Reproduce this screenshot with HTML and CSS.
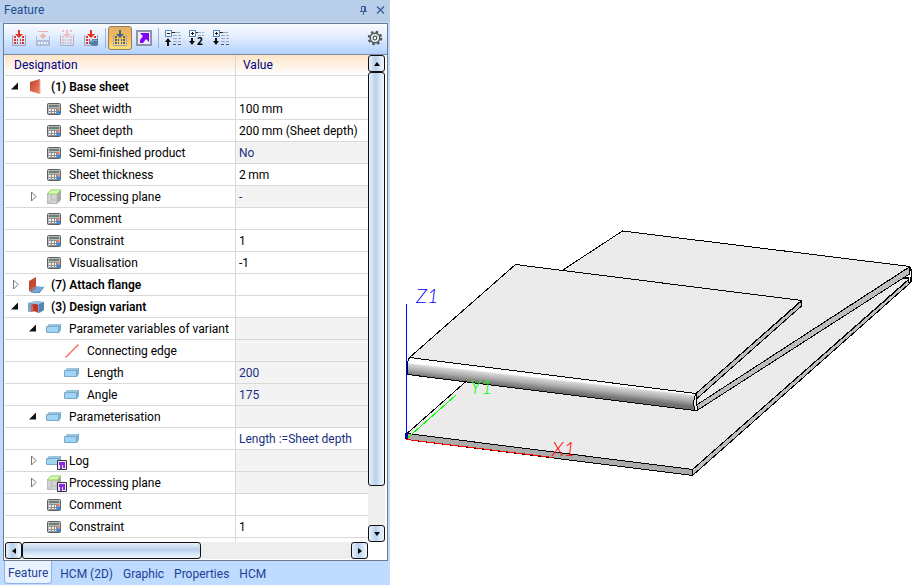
FILE: index.html
```html
<!DOCTYPE html>
<html lang="en">
<head>
<meta charset="utf-8">
<title>Feature</title>
<link rel="stylesheet" href="styles.css">
</head>
<body>
<svg class="defs" aria-hidden="true">
  <defs>
    <linearGradient id="gRed" x1="0" y1="0" x2="1" y2="1"><stop offset="0" stop-color="#c23a22"/><stop offset="1" stop-color="#f08a70"/></linearGradient>
    <symbol id="calc" viewBox="0 0 16 16"><rect x="1.500" y="2.500" width="13" height="11" rx="1" fill="#b9b9b9" stroke="#606060"/><path d="M3 4h10v2H3z" fill="#6b8074"/><path d="M3 7h10v6H3z" fill="#8f8f8f"/><path d="M3 8h2v2H3zM6 8h2v2H6zM3 11h2v1H3zM6 11h2v1H6zM9 8h1v2H9zM9 11h1v1H9z" fill="#f4f4f4"/><path d="M11 7h2v2h-2z" fill="#f27a5c"/><path d="M11 10h3v3h-3z" fill="#2f8df0"/></symbol>
    <symbol id="cube" viewBox="0 0 16 16"><path d="M1 5h10v10H1z" fill="#d4d4d4"/><path d="M11 5l4-4v10l-4 4z" fill="#a9a9a9"/><path d="M1 5l4-4h10l-4 4z" fill="#dcf8c0" stroke="#8bd94a"/><path d="M1.500 5v9.500h9.500V5M5.500 5v6L2 14M5.500 11H11" fill="none" stroke="#bbb"/></symbol>
    <symbol id="plate" viewBox="0 0 16 16"><path d="M1 6l2-3h12v6l-2 3H1z" fill="#7fb0cf"/><path d="M1 6h12v5H1z" fill="#9fd4f7"/><path d="M.500 5.500h12v6H.500zM12.500 5.500l2-2.500" fill="none" stroke="#7aa9c8"/><path d="M3 4h11" stroke="#b4d8ec"/></symbol>
    <symbol id="sheet" viewBox="0 0 16 16"><path d="M2 3l10-3v15l-10-3z" fill="url(#gRed)"/><path d="M12 1v14" stroke="#f2b4a3"/></symbol>
    <symbol id="flange" viewBox="0 0 16 16"><path d="M1 4l7-4v9l-7 5z" fill="#c5492f"/><path d="M1 14l7-5 8 1-5 6z" fill="#78a9d6"/><path d="M1 14l7-5v2l-5 4z" fill="#9d6f78"/><path d="M3 15l8 1 5-6" fill="none" stroke="#4e83b4"/></symbol>
    <symbol id="variant" viewBox="0 0 16 16"><path d="M0 4l8-2 8 1v8l-5 3-4-2-7 1z" fill="#77a5cb"/><path d="M0 4l8-2 8 1-5 2z" fill="#9bc2e0"/><path d="M11 5l5-2v8l-5 3z" fill="#5586b3"/><path d="M3 6q5-2 7 0v8q-3-3-7-1z" fill="#bd3526"/><path d="M3 6l2 1v5l-2 1z" fill="#dc6954"/></symbol>
    <symbol id="edge" viewBox="0 0 16 16"><path d="M1.500 14.500l13-13" stroke="#ff6b61" stroke-width="1.500"/></symbol>
    <symbol id="link" viewBox="0 0 10 10"><path d="M.5.5h9v9h-9z" fill="#eee3fb" stroke="#333"/><path d="M2 2h6v6H6V5H5v4H3V5H2z" fill="#8a2be2"/></symbol>
    <symbol id="open" viewBox="0 0 9 11"><path d="M8 1.500v7H1z" fill="#111"/></symbol>
    <symbol id="closed" viewBox="0 0 9 11"><path d="M3.500 1v9l4.500-4.500z" fill="#fff" stroke="#777"/></symbol>
    <symbol id="cells" viewBox="0 0 16 16"><path d="M1.500 5v10.500h13V5" fill="none" stroke="#9ca6bd"/><path d="M3 6h2v2H3zM11 6h2v2h-2zM3 9h2v2H3zM6 9h1v2H6zM9 9h1v2H9zM11 9h2v2h-2zM3 12h2v2H3zM6 12h1v2H6zM9 12h1v2H9zM11 12h2v2h-2z"/><path d="M7 0h2v4h3L8 8 4 4h3z"/></symbol>
    <symbol id="list" viewBox="0 0 10 16"><path d="M0 2.500h4" stroke="#222"/><path d="M1 5.500h4M6 5.500h3M1 8.500h4M6 8.500h3M1 11.500h4M6 11.500h3M3 2.500h5" stroke="#9baab5"/><path d="M1 14.500h3M6 14.500h3" stroke="#556"/></symbol>
    <symbol id="plus" viewBox="0 0 7 7"><path d="M.5.500h6v6h-6z" fill="#fff" stroke="#4c83bd"/><path d="M2 3.500h3M3.500 2v3" stroke="#111"/></symbol>
    <symbol id="down" viewBox="0 0 6 7"><path d="M2 0h2v3h2L3 7 0 3h2z" fill="#111"/></symbol>
  </defs>
</svg>
<div class="app">
  <aside class="panel">
    <header class="title">
      <h1>Feature</h1>
      <button class="tiny" aria-label="Pin"><svg viewBox="0 0 9 10"><path d="M2.500 6V1.500h4V6M1 6.500h7M4.500 7v3M5.500 2v4" fill="none" stroke="#385f9c"/></svg></button>
      <button class="tiny" aria-label="Close"><svg viewBox="0 0 9 10"><path d="M1 1.500l7 7M8 1.500l-7 7" fill="none" stroke="#385f9c" stroke-width="1.400"/></svg></button>
    </header>
    <div class="frame">
      <div class="toolbar">
        <button aria-label="Insert feature"><svg class="ic red"><use href="#cells"/></svg></button>
        <button aria-label="Insert at end" disabled><svg class="ic" viewBox="0 0 16 16"><path d="M3 1.500h10" stroke="#efb3ad"/><path d="M7 3h2v2h3L8 9 4 5h3z" fill="#efb3ad"/><path d="M1.500 6v9.500h13V6" stroke="#a9b9d5" fill="none"/><path d="M2 10h12v5H2z" fill="#b0bfdb"/><path d="M3 12h2v2H3zM6 12h2v2H6zM9 12h2v2H9zM12 12h1v2h-1z" fill="#eef4ff"/></svg></button>
        <button aria-label="Insert all" disabled><svg class="ic pale" viewBox="0 0 16 16"><use href="#cells"/><path d="M3 0h2v2H3zM11 0h2v2h-2z"/></svg></button>
        <button aria-label="Edit feature"><svg class="ic red" viewBox="0 0 16 16"><use href="#cells"/><path d="M6 12l5-3 4 0v6l-3 1-4-1z" fill="#4e7da8"/><path d="M8 12l4-2 2 1" fill="none" stroke="#91b5d2"/></svg></button>
        <i class="sep"></i>
        <button class="on" aria-label="Show structure" aria-pressed="true"><svg class="ic slate"><use href="#cells"/></svg></button>
        <button aria-label="Show links"><svg class="ic" viewBox="0 0 16 16"><path d="M1 1h14v14H1z" fill="#f1ecfb" stroke="#8a94aa" stroke-width="2"/><path d="M4 3h9v9l-3-3-3 4H4v-3l3-4z" fill="#8000ff"/></svg></button>
        <i class="sep"></i>
        <button aria-label="Collapse all"><svg class="ic" viewBox="0 0 16 16"><path d="M.5.500h6v6h-6z" fill="#fff" stroke="#4c83bd"/><path d="M2 3.500h3" stroke="#111"/><path d="M3 8l3 4H4v4H2v-4H0z" fill="#111"/><use href="#list" x="7" width="10" height="16"/></svg></button>
        <button aria-label="Expand two levels"><svg class="ic" viewBox="0 0 16 16"><use href="#plus" width="7" height="7"/><use href="#down" y="8" width="6" height="7"/><path d="M7 2.500h3" stroke="#222"/><path d="M9 2.500h6M9 5.500h6" stroke="#9baab5" stroke-dasharray="3 1"/><text x="8" y="15" class="two">2</text></svg></button>
        <button aria-label="Expand all"><svg class="ic" viewBox="0 0 16 16"><use href="#plus" width="7" height="7"/><use href="#down" y="8" width="6" height="7"/><use href="#list" x="7" width="10" height="16"/></svg></button>
        <button class="gear" aria-label="Settings"><svg class="ic" viewBox="0 0 16 16"><circle cx="8" cy="8" r="6.300" fill="none" stroke="#555" stroke-width="2" stroke-dasharray="2.475 2.475"/><circle cx="8" cy="8" r="4.800" fill="#e4effe" stroke="#555" stroke-width="1.500"/><circle cx="8" cy="8" r="1.800" fill="#fff" stroke="#555" stroke-width="1.200"/></svg></button>
      </div>
      <div class="grid">
        <div class="rows">
          <table>
            <thead><tr><th>Designation</th><th>Value</th></tr></thead>
            <tbody>
              <tr class="l0"><td><svg class="tw"><use href="#open"/></svg><svg class="ic"><use href="#sheet"/></svg><b>(1) Base sheet</b></td><td></td></tr>
              <tr class="l1"><td><i class="tw"></i><svg class="ic"><use href="#calc"/></svg>Sheet width</td><td>100&#8201;mm</td></tr>
              <tr class="l1"><td><i class="tw"></i><svg class="ic"><use href="#calc"/></svg>Sheet depth</td><td>200&#8201;mm (Sheet depth)</td></tr>
              <tr class="l1"><td><i class="tw"></i><svg class="ic"><use href="#calc"/></svg>Semi-finished product</td><td class="ro">No</td></tr>
              <tr class="l1"><td><i class="tw"></i><svg class="ic"><use href="#calc"/></svg>Sheet thickness</td><td>2&#8201;mm</td></tr>
              <tr class="l1"><td><svg class="tw"><use href="#closed"/></svg><svg class="ic"><use href="#cube"/></svg>Processing plane</td><td class="ro">-</td></tr>
              <tr class="l1"><td><i class="tw"></i><svg class="ic"><use href="#calc"/></svg>Comment</td><td></td></tr>
              <tr class="l1"><td><i class="tw"></i><svg class="ic"><use href="#calc"/></svg>Constraint</td><td>1</td></tr>
              <tr class="l1"><td><i class="tw"></i><svg class="ic"><use href="#calc"/></svg>Visualisation</td><td>-1</td></tr>
              <tr class="l0"><td><svg class="tw"><use href="#closed"/></svg><svg class="ic"><use href="#flange"/></svg><b>(7) Attach flange</b></td><td></td></tr>
              <tr class="l0"><td><svg class="tw"><use href="#open"/></svg><svg class="ic"><use href="#variant"/></svg><b>(3) Design variant</b></td><td></td></tr>
              <tr class="l1"><td><svg class="tw"><use href="#open"/></svg><svg class="ic"><use href="#plate"/></svg>Parameter variables of variant</td><td class="ro"></td></tr>
              <tr class="l2"><td><i class="tw"></i><svg class="ic"><use href="#edge"/></svg>Connecting edge</td><td class="ro"></td></tr>
              <tr class="l2"><td><i class="tw"></i><svg class="ic"><use href="#plate"/></svg>Length</td><td class="ro">200</td></tr>
              <tr class="l2"><td><i class="tw"></i><svg class="ic"><use href="#plate"/></svg>Angle</td><td class="ro">175</td></tr>
              <tr class="l1"><td><svg class="tw"><use href="#open"/></svg><svg class="ic"><use href="#plate"/></svg>Parameterisation</td><td class="ro"></td></tr>
              <tr class="l2"><td><i class="tw"></i><svg class="ic"><use href="#plate"/></svg></td><td class="rw">Length :=Sheet depth</td></tr>
              <tr class="l1"><td><svg class="tw"><use href="#closed"/></svg><svg class="ic" viewBox="0 0 16 16"><use href="#plate"/><use href="#link" x="11" y="7" width="10" height="10"/></svg>Log</td><td class="ro"></td></tr>
              <tr class="l1"><td><svg class="tw"><use href="#closed"/></svg><svg class="ic" viewBox="0 0 16 16"><use href="#cube"/><use href="#link" x="11" y="7" width="10" height="10"/></svg>Processing plane</td><td class="ro"></td></tr>
              <tr class="l1"><td><i class="tw"></i><svg class="ic"><use href="#calc"/></svg>Comment</td><td></td></tr>
              <tr class="l1"><td><i class="tw"></i><svg class="ic"><use href="#calc"/></svg>Constraint</td><td>1</td></tr>
              <tr class="l1"><td></td><td></td></tr>
            </tbody>
          </table>
        </div>
        <div class="sb vert">
          <button class="arrow" aria-label="Scroll up"><svg viewBox="0 0 8 8"><path d="M1 6h6L4 2z"/></svg></button>
          <div class="thumb"></div><div class="track"></div>
          <button class="arrow" aria-label="Scroll down"><svg viewBox="0 0 8 8"><path d="M1 2h6L4 6z"/></svg></button>
        </div>
        <div class="sb horz">
          <button class="arrow" aria-label="Scroll left"><svg viewBox="0 0 8 8"><path d="M6 1v6L2 4z"/></svg></button>
          <div class="thumb"></div><div class="track"></div>
          <button class="arrow" aria-label="Scroll right"><svg viewBox="0 0 8 8"><path d="M2 1v6l4-3z"/></svg></button>
        </div>
      </div>
    </div>
    <nav class="tabs"><button class="active">Feature</button><button>HCM (2D)</button><button>Graphic</button><button>Properties</button><button>HCM</button></nav>
  </aside>
  <main class="view">
    <svg class="scene" viewBox="390 0 524 585" preserveAspectRatio="xMinYMin meet" role="img" aria-label="Folded sheet">
      <defs><linearGradient id="roll" gradientUnits="userSpaceOnUse" x1="410" y1="357" x2="408" y2="375"><stop offset="0" stop-color="#fff"/><stop offset=".32" stop-color="#fff"/><stop offset=".4" stop-color="#d8d8d8"/><stop offset=".7" stop-color="#aaa"/><stop offset="1" stop-color="#707070"/></linearGradient></defs>
      <g shape-rendering="crispEdges" stroke="#000" stroke-linejoin="round" fill="#ebebeb">
        <path d="M407 433.500L624 242L909 279L692.500 469.500z"/>
        <path d="M407 433.500L692.500 469.500V475.500L406.500 439.500z" fill="#acacac"/>
        <path d="M692.500 469.500L909 279.500V284L692.500 475.500z" fill="#bebebe"/>
        <path d="M909 267q4 3 1 16l-2-1 1-4-8-1 6-4z" fill="#fff"/>
        <path d="M622.500 231L910 266.500L696.500 405L410 370z"/>
        <path d="M696.500 405L909.500 267V274L697 410.500z" fill="#bebebe"/>
        <path d="M696 393.500L801.500 301V306L697 398.500z" fill="#bebebe"/>
        <path d="M409.500 357.500L515.500 264.500L801.500 300.500L696 393.500z"/>
        <path d="M409.500 357.500L696 393.500L694.500 410.500L407.500 374.500V362z" fill="url(#roll)"/>
        <path d="M696 393.500q-4 8-1 17l2 0v-5q-2-6 0-9z" fill="#eee"/>
        <path d="M910 267q3 4 1 15" fill="none"/>
        <path d="M406.500 439.500L553 457.500" stroke="#f00" fill="none"/>
        <path d="M406.500 304V439" stroke="#00f"/>
        <path d="M407 438.500L456 395" stroke="#0f0"/>
        <path d="M405.500 433.500h2v5h-2z" stroke="#00a" fill="#00a"/>
      </g>
      <text class="axis" x="416" y="303" fill="#00f">Z1</text>
      <text class="axis" x="470" y="394" fill="#0f0">Y1</text>
      <text class="axis" x="552" y="456" fill="#f00">X1</text>
    </svg>
  </main>
</div>
</body>
</html>
```
FILE: styles.css
```css
* { box-sizing: border-box; }
body { margin: 0; background: #fff; color: #000; font: 12px/16px Roboto, "Open Sans", sans-serif; }
button { margin: 0; padding: 0; border: 0; background: none; color: inherit; font: inherit; }
svg { display: block; flex: none; }
.defs { position: absolute; width: 0; height: 0; }
.app { display: flex; min-height: 100vh; }
.panel { display: flex; flex-direction: column; flex: none; width: 390px; background: #bfdbff; }
.title { display: flex; align-items: center; gap: 8px; height: 22px; padding: 0 5px 2px 4px; background: #b8cee9; color: #1e4d93; }
.title h1 { flex: 1; margin: 0; font-size: 12px; font-weight: 400; }
.tiny svg { width: 9px; height: 10px; }
.frame { display: flex; flex: 1; flex-direction: column; margin: 1px 2px 0 3px; border: 1px solid #6f7b8b; background: #fff; }
.toolbar { display: flex; align-items: center; height: 31px; padding: 0 0 2px 3px; border-bottom: 1px solid #7c8ba1; background: linear-gradient(#fafcff, #e0ecfe 45%, #b3d1fd); }
.toolbar button { display: grid; place-items: center; width: 24px; height: 24px; }
.ic { width: 16px; height: 16px; overflow: visible; }
.toolbar .on { border: 1px solid #8f7f5e; border-radius: 3px; background: linear-gradient(#dfb06b, #fdba4b 50%, #ffe17c); }
.toolbar .gear { margin-left: auto; }
.sep { width: 1px; height: 20px; margin: 0 2px; background: #9fb3cf; }
.red { fill: #e8301c; }
.pale { fill: #efb3ad; opacity: .8; }
.slate { fill: #3f668c; }
.two { font: 700 10px "Open Sans", sans-serif; }
.grid { display: grid; flex: 1; grid-template: minmax(0, 1fr) 17px / minmax(0, 1fr) 17px; padding: 0 2px 1px 1px; }
.rows { height: 0; min-height: 100%; overflow: hidden; }
table { width: 100%; border-collapse: separate; border-spacing: 0; table-layout: fixed; }
th { width: 230px; height: 21px; padding: 0 9px; border-bottom: 1px solid #d9d9d9; background: linear-gradient(#fde4c8, #fff); color: #000080; font-weight: 400; text-align: left; }
th + th { width: auto; }
th + th, td + td { border-left: 1px solid #d9d9d9; }
th + th { padding-left: 7px; }
td { height: 22px; padding: 0; border-bottom: 1px solid #d9d9d9; white-space: nowrap; }
td:first-child { display: flex; align-items: center; border-right: 0; }
td + td { padding-left: 3px; }
td b { font-weight: 600; }
td .ic { margin-right: 7px; }
.tw { flex: none; width: 9px; height: 11px; margin: 0 9px 0 5px; }
.l1 td:first-child { padding-left: 18px; }
.l2 td:first-child { padding-left: 36px; }
.ro { background: #f3f3f3; color: #1a2f80; }
.rw { color: #1a2f80; }
.sb { display: flex; background: #eee; }
.vert { flex-direction: column; }
.arrow, .thumb { border: 1px solid #111; border-radius: 3px; background: linear-gradient(90deg, #e8f1fa, #b9cfeb 45%, #d9e9f8 75%, #eef6fd); }
.sb .arrow { display: grid; flex: none; place-items: center; width: 17px; height: 17px; }
.arrow svg { width: 8px; height: 8px; }
.vert .thumb { flex: 414; }
.vert .track { flex: 39; }
.horz .thumb { flex: 178; background: linear-gradient(#e8f1fa, #b9cfeb 45%, #d9e9f8 75%, #eef6fd); }
.horz .track { flex: 151; }
.tabs { display: flex; height: 24px; padding: 0 4px 1px; color: #1e3f94; }
.tabs button { padding: 2px 5px 0; }
.tabs .active { padding: 2px 3px 0; margin-right: 3px; border: 1px solid #8db2e3; border-top: 0; border-radius: 0 0 4px 4px; background: #e9f3ff; }
.view { flex: 1; min-width: 0; }
.scene { width: 100%; }
.axis { font: italic 300 20px Lato, sans-serif; }
```
